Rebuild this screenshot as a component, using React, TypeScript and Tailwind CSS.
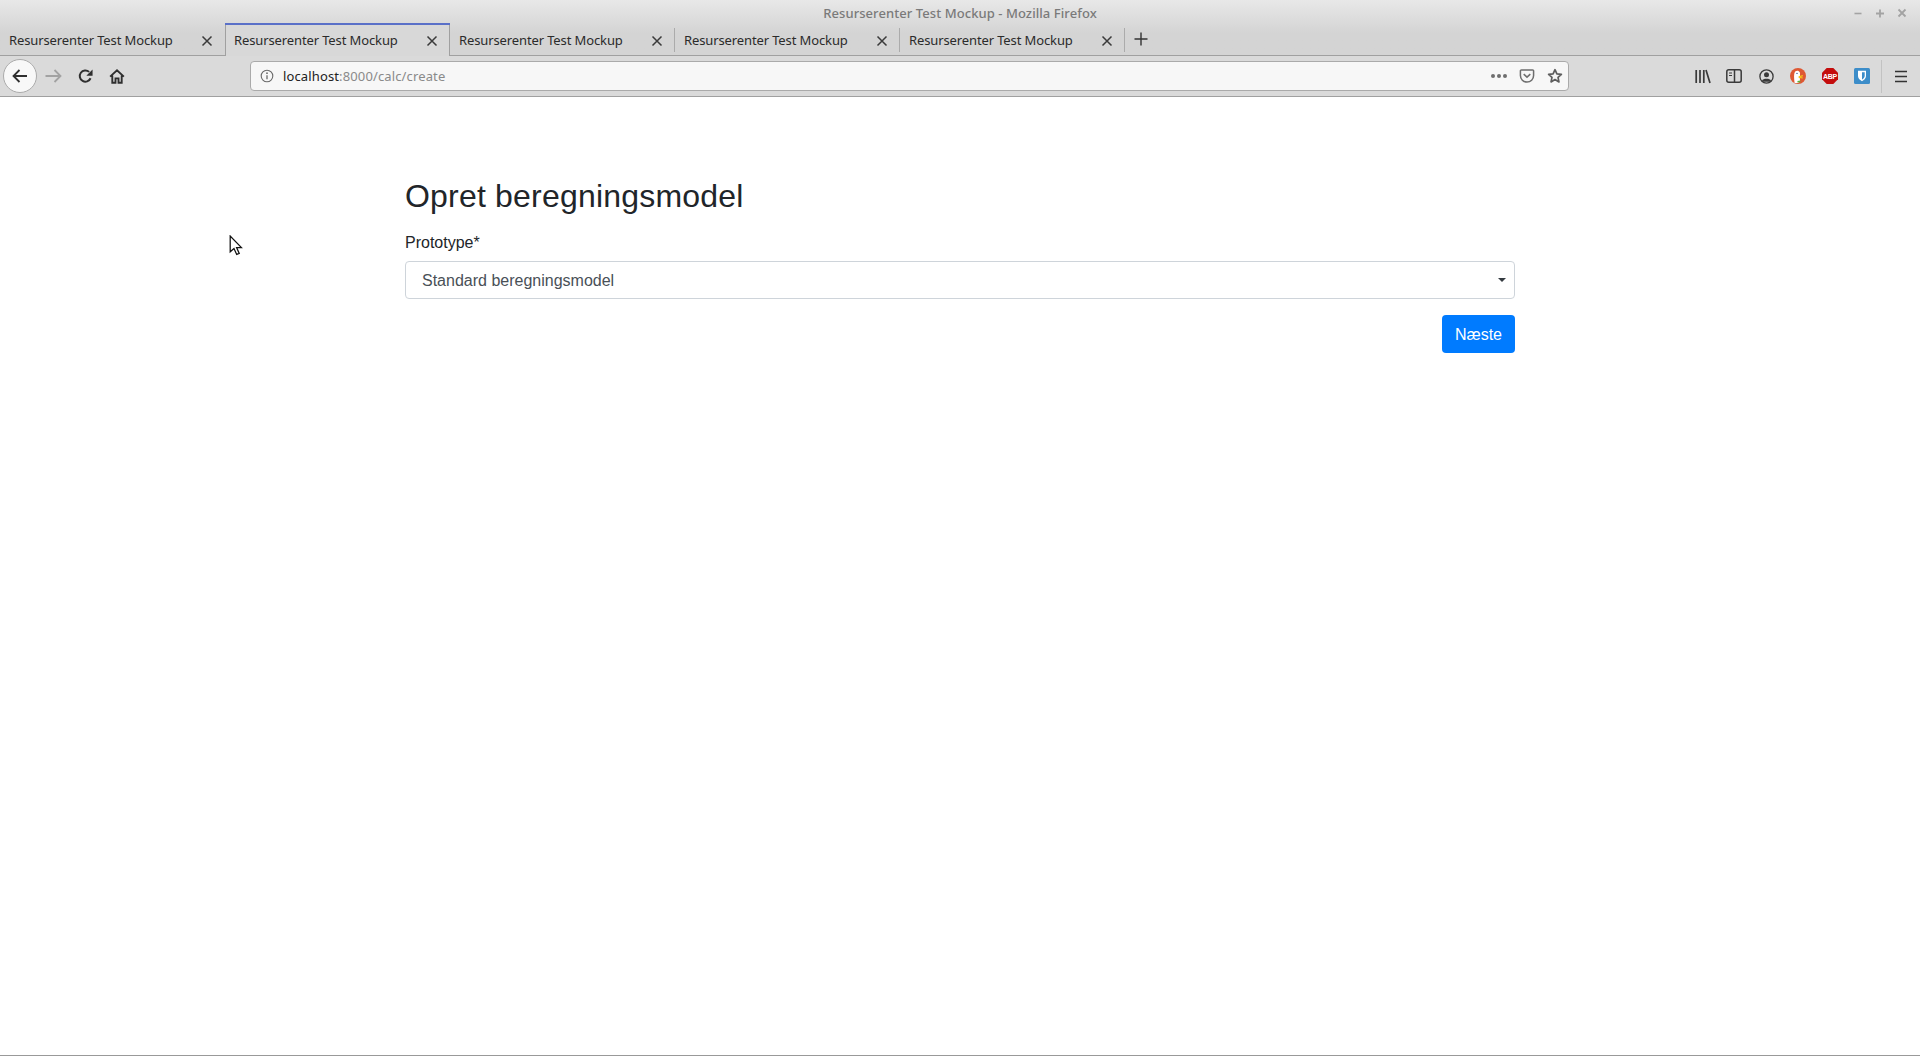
const CHROME_FONT = "font-['Noto_Sans','Open_Sans',sans-serif]";

function CloseIcon() {
  return (
    <svg width="12" height="12" viewBox="0 0 12 12" className="shrink-0 mt-[3px]">
      <path d="M1.5 1.5l9 9M10.5 1.5l-9 9" stroke="#3a3a3a" strokeWidth="1.5" fill="none" />
    </svg>
  );
}

function Tab({ active }: { active?: boolean }) {
  return (
    <div
      className={
        active
          ? "relative z-10 -mb-px flex h-[33px] w-[225px] items-center border-x border-[#a0a0a0] bg-[#d8d8d8] pl-[8px] pr-[11px]"
          : "relative flex h-[32px] w-[225px] items-center pl-[9px] pr-[12px]"
      }
    >
      {active && <div className="absolute inset-x-[-1px] top-0 h-[2px] bg-[#5a70c8]" />}
      <span className="mt-[3px] flex-1 whitespace-nowrap text-[13px] tracking-[-0.12px] text-[#2b2b2b]">
        Resurserenter Test Mockup
      </span>
      <CloseIcon />
    </div>
  );
}

function Separator() {
  return <div className="h-[24px] w-px shrink-0 -ml-px mt-[5px] bg-[#ababab]" />;
}

export default function App() {
  return (
    <div className={"flex h-[1056px] flex-col overflow-hidden border-b border-[#999] bg-white relative " + CHROME_FONT}>
      {/* Window chrome */}
      <div className="border-b border-[#a0a0a0] bg-gradient-to-b from-[#e8e8e8] from-0% to-[#d4d4d4] to-60%">
        <div className="relative flex h-[23px] items-center justify-center">
          <span className="mt-[4px] text-[13px] font-medium tracking-[0.07px] text-[#7a7a7a]">
            Resurserenter Test Mockup - Mozilla Firefox
          </span>
          <div className="absolute right-[13px] top-[8px] flex items-center gap-[12px]">
            <svg width="10" height="10" viewBox="0 0 10 10">
              <path d="M1.5 5.5h7" stroke="#a3a3a3" strokeWidth="1.6" />
            </svg>
            <svg width="10" height="10" viewBox="0 0 10 10">
              <path d="M1 5.5h8M5 1.5v8" stroke="#a3a3a3" strokeWidth="1.8" />
            </svg>
            <svg width="10" height="10" viewBox="0 0 10 10">
              <path d="M1.5 1.5l7 7M8.5 1.5l-7 7" stroke="#a3a3a3" strokeWidth="1.8" />
            </svg>
          </div>
        </div>
        <div className="flex h-[32px] items-start">
          <Tab />
          <Tab active />
          <Tab />
          <Separator />
          <Tab />
          <Separator />
          <Tab />
          <Separator />
          <svg width="16" height="16" viewBox="0 0 16 16" className="ml-[8px] mt-[8px]">
            <path d="M8 1.5v13M1.5 8h13" stroke="#333" strokeWidth="1.4" />
          </svg>
        </div>
      </div>

      {/* Toolbar */}
      <div className="relative flex h-[41px] items-center border-b border-[#a0a0a0] bg-[#dadada]">
        <div className="ml-[3px] flex h-[34px] w-[34px] items-center justify-center rounded-full border border-[#ababab] bg-[#f8f8f8]">
          <svg width="18" height="18" viewBox="0 0 18 18">
            <path d="M16 9H2.5M8.5 3L2.5 9l6 6" stroke="#2f2f2f" strokeWidth="1.8" fill="none" />
          </svg>
        </div>
        <svg width="17" height="18" viewBox="0 0 17 18" className="ml-[8px]">
          <path d="M0.5 9h15M9.5 3l6 6-6 6" stroke="#a2a2a2" strokeWidth="1.8" fill="none" />
        </svg>
        <svg width="15" height="16" viewBox="0 0 16 16" className="ml-[16px]">
          <path d="M13.4 10.4A6 6 0 1 1 11.9 3.6" stroke="#2f2f2f" strokeWidth="2.1" fill="none" />
          <path d="M15.5 1v6.6H8.9z" fill="#2f2f2f" />
        </svg>
        <svg width="16" height="17" viewBox="0 0 17 17" className="ml-[16px]">
          <path
            d="M1.2 8.6L8.5 1.8l7.3 6.8M3.5 7.5v7.7h3.4v-4.7h3.2v4.7h3.4V7.5"
            stroke="#2f2f2f"
            strokeWidth="2"
            fill="none"
          />
        </svg>

        {/* URL bar */}
        <div className="ml-[125px] flex h-[30px] w-[1319px] items-center rounded-[4px] border border-[#aaaaaa] bg-[#f7f7f7] pl-[9px] pr-[5px]">
          <svg width="14" height="14" viewBox="0 0 14 14" className="shrink-0">
            <circle cx="7" cy="7" r="5.8" stroke="#6a6a6a" strokeWidth="1.1" fill="none" />
            <path d="M7 6.2v4" stroke="#6a6a6a" strokeWidth="1.3" />
            <circle cx="7" cy="4.2" r="0.9" fill="#6a6a6a" />
          </svg>
          <span className="ml-[9px] mt-[1px] flex-1 whitespace-nowrap text-[13px] tracking-[0.13px]">
            <span className="text-[#222]">localhost</span>
            <span className="text-[#8a8a8a]">:8000/calc/create</span>
          </span>
          <div className="flex items-center gap-[2px]">
            <span className="h-[4px] w-[4px] rounded-full bg-[#6e6e6e]" />
            <span className="h-[4px] w-[4px] rounded-full bg-[#6e6e6e]" />
            <span className="h-[4px] w-[4px] rounded-full bg-[#6e6e6e]" />
          </div>
          <svg width="16" height="16" viewBox="0 0 17 16" className="ml-[12px]">
            <path
              d="M2.5 1.5h12a1 1 0 0 1 1 1v5a7 7 0 0 1-14 0v-5a1 1 0 0 1 1-1z"
              stroke="#6e6e6e"
              strokeWidth="1.6"
              fill="none"
            />
            <path d="M5 6l3.5 3.2L12 6" stroke="#6e6e6e" strokeWidth="1.6" fill="none" />
          </svg>
          <svg width="16" height="16" viewBox="0 0 17 17" className="ml-[12px]">
            <path
              d="M8.5 1.8l2 4.5 4.8.5-3.6 3.2 1 4.8-4.2-2.5-4.2 2.5 1-4.8-3.6-3.2 4.8-.5z"
              stroke="#5e5e5e"
              strokeWidth="1.8"
              strokeLinejoin="round"
              fill="none"
            />
          </svg>
        </div>

        {/* Right icons */}
        <svg width="16" height="15" viewBox="0 0 16 15" className="ml-[126px]">
          <path d="M1.2 1v13M5 1v13M8.8 1v13M11 1l4 13" stroke="#3a3a3a" strokeWidth="1.7" fill="none" />
        </svg>
        <svg width="16" height="14" viewBox="0 0 16 14" className="ml-[15px]">
          <rect x="0.8" y="0.8" width="14.4" height="12.4" rx="2" stroke="#3a3a3a" strokeWidth="1.5" fill="none" />
          <path d="M8.5 1v12" stroke="#3a3a3a" strokeWidth="1.5" />
          <path d="M3 4h3M3 6.5h3" stroke="#3a3a3a" strokeWidth="1.2" />
        </svg>
        <svg width="15" height="15" viewBox="0 0 15 15" className="ml-[17px]">
          <circle cx="7.5" cy="7.5" r="6.6" stroke="#3a3a3a" strokeWidth="1.3" fill="none" />
          <circle cx="7.5" cy="5.8" r="2.5" fill="#3a3a3a" />
          <path d="M3 11.5c1-2.4 8-2.4 9 0l-1 1.2h-7z" fill="#3a3a3a" />
        </svg>
        <svg width="16" height="16" viewBox="0 0 16 16" className="ml-[16px]">
          <circle cx="8" cy="8" r="8" fill="#de5833" />
          <path d="M4.6 15C4 10 3.6 6 5 3.8 6.4 2 9 2.4 9.8 4.2 10.4 6 9.6 9 10 13l-1.5 2z" fill="#fff" />
          <path d="M8.6 8.2l4.2-1.2.2 1.2-2.4.8 2.2.4-.1 1.2-4-.7z" fill="#f5c518" />
          <path d="M7.4 13l2.8-.4.3 1.3-2.8.9z" fill="#5fb03a" />
          <circle cx="7" cy="5.4" r="0.7" fill="#2d4f8e" />
        </svg>
        <div className="relative ml-[16px] h-[16px] w-[16px]">
          <svg width="16" height="16" viewBox="0 0 16 16" className="absolute inset-0">
            <path d="M4.7 0h6.6L16 4.7v6.6L11.3 16H4.7L0 11.3V4.7z" fill="#c40d0d" />
          </svg>
          <span className="absolute inset-0 flex items-center justify-center font-['Liberation_Sans',sans-serif] text-[7px] font-bold leading-none tracking-[-0.2px] text-white">
            ABP
          </span>
        </div>
        <svg width="16" height="16" viewBox="0 0 16 16" className="ml-[16px]">
          <rect width="16" height="16" rx="1.5" fill="#3c8dc9" />
          <path d="M4 2.8h8v5.2c0 2.6-2.2 4.2-4 5.2-1.8-1-4-2.6-4-5.2z" fill="#fff" />
          <path d="M8 4.2h2.7V8c0 1.6-1.4 2.8-2.7 3.6z" fill="#3c8dc9" />
        </svg>
        <div className="ml-[11px] h-[33px] w-px bg-[#c2c2c2]" />
        <svg width="12" height="13" viewBox="0 0 12 13" className="ml-[13px]">
          <path d="M0 1.5h12M0 6.5h12M0 11.5h12" stroke="#333" strokeWidth="1.7" />
        </svg>
      </div>

      {/* Page */}
      <main className="mx-auto w-[1110px] flex-1 pt-[80px] font-['Liberation_Sans',sans-serif] text-[#212529]">
        <h1 className="text-[32px] font-medium leading-[38px] tracking-[0.2px]">Opret beregningsmodel</h1>
        <label className="mt-[16px] block text-[16px] leading-[24px]">Prototype*</label>
        <div className="mt-[6px] flex h-[38px] items-center justify-between rounded-[4px] border border-[#ced4da] bg-white pl-[16px] pr-[8px] text-[16px] text-[#495057]">
          <span className="mt-[1px]">Standard beregningsmodel</span>
          <span className="h-0 w-0 border-x-[4px] border-t-[4px] border-x-transparent border-t-[#343a40]" />
        </div>
        <div className="mt-[16px] flex justify-end">
          <button className="h-[38px] rounded-[4px] bg-[#007bff] px-[13px] pt-[1px] text-[16px] text-white">Næste</button>
        </div>
      </main>

      {/* Mouse pointer */}
      <svg width="15" height="21" viewBox="0 0 14 20" className="absolute left-[229px] top-[235px]">
        <path d="M1 1v15l3.6-3.2 2.6 5.7 2.4-1-2.5-5.5h4.6z" fill="#fff" stroke="#111" strokeWidth="1.2" />
      </svg>
    </div>
  );
}
